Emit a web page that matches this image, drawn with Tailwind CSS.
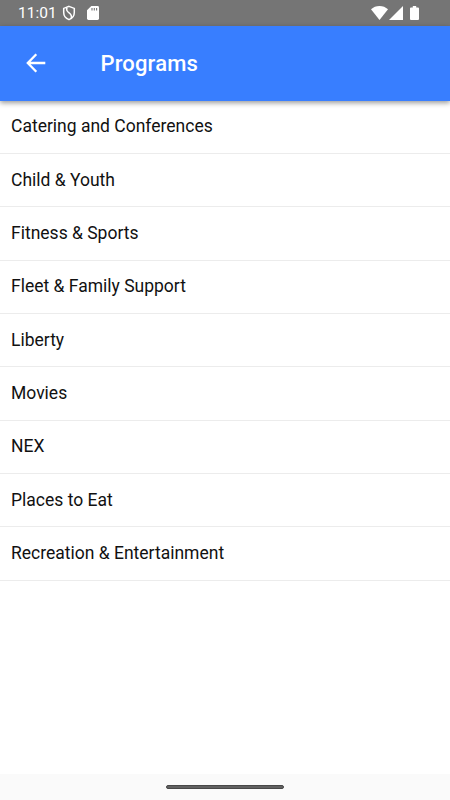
<!DOCTYPE html>
<html lang="en">
     <head>
          <title>Programs</title>
          <meta charset="utf-8">
          <meta name="viewport" content="width=device-width, initial-scale=1">
          <script src="https://cdn.jsdelivr.net/npm/@tailwindcss/browser@4"></script>
     </head>
     <body class="bg-white font-[Roboto,sans-serif]">
          <div class="flex flex-col h-screen overflow-hidden">
               <!-- status bar -->
               <div class="flex items-center h-[26px] shrink-0 bg-[#757575] text-white pl-[18px] pr-[31px]">
                    <span class="text-[15.5px] leading-none w-[39px] pt-px whitespace-nowrap">11:01</span>
                    <svg class="ml-[5px] w-[14px] h-4" viewBox="0 0 14 16" fill="none" stroke="currentColor" stroke-width="1.5"><path d="M7 1.4L12.3 3.4V7.5C12.3 11 10.2 13.4 7 14.6C3.8 13.4 1.7 11 1.7 7.5V3.4Z"/><path d="M5 2.6C4 5 4.8 6.2 6.8 7.6C9.2 9.3 10 10.6 9.2 13"/></svg>
                    <svg class="ml-[11px] w-3 h-[14px]" viewBox="0 0 12 14"><path fill="currentColor" d="M4.3 0H10.6Q12 0 12 1.4V12.6Q12 14 10.6 14H1.4Q0 14 0 12.6V4.3Z"/><path stroke="#757575" stroke-width="1.1" d="M5 2V4.6M7.3 2V4.6M9.6 2V4.6"/></svg>
                    <svg class="ml-auto w-[17px] h-[14px]" viewBox="0 0 17 14"><path fill="currentColor" d="M8.5 14L0 3.3C2.3 1.2 5.2 0 8.5 0S14.7 1.2 17 3.3Z"/></svg>
                    <svg class="ml-px w-[14px] h-[14px]" viewBox="0 0 14 14"><path fill="currentColor" d="M14 0V14H0Z"/></svg>
                    <svg class="ml-[7px] w-[9px] h-[14px]" viewBox="0 0 9 14"><path fill="currentColor" d="M2.8 0H6.2V1.4H8Q9 1.4 9 2.4V13Q9 14 8 14H1Q0 14 0 13V2.4Q0 1.4 1 1.4H2.8Z"/></svg>
               </div>
               <header class="relative z-10 flex items-center h-[74.6px] shrink-0 bg-[#387eff] text-white pl-[26px] shadow-[0_2px_5px_rgba(0,0,0,0.4)]">
                    <svg class="w-5 h-5" viewBox="0 0 20 20" fill="none" stroke="currentColor" stroke-width="2.3"><path d="M19.3 10H2M10.3 1.3L1.8 10L10.3 18.7"/></svg>
                    <h1 class="ml-[54.5px] text-[22px] font-medium tracking-[0.15px]">Programs</h1>
               </header>
               <ul class="flex-1 text-[17.5px] text-[#111]">
                    <li class="flex items-center h-[53.35px] pl-[11px] pb-[0.6px] border-b border-[#ececec]">Catering and Conferences</li>
                    <li class="flex items-center h-[53.35px] pl-[11px] pb-[0.6px] border-b border-[#ececec]">Child &amp; Youth</li>
                    <li class="flex items-center h-[53.35px] pl-[11px] pb-[0.6px] border-b border-[#ececec]">Fitness &amp; Sports</li>
                    <li class="flex items-center h-[53.35px] pl-[11px] pb-[0.6px] border-b border-[#ececec]">Fleet &amp; Family Support</li>
                    <li class="flex items-center h-[53.35px] pl-[11px] pb-[0.6px] border-b border-[#ececec]">Liberty</li>
                    <li class="flex items-center h-[53.35px] pl-[11px] pb-[0.6px] border-b border-[#ececec]">Movies</li>
                    <li class="flex items-center h-[53.35px] pl-[11px] pb-[0.6px] border-b border-[#ececec]">NEX</li>
                    <li class="flex items-center h-[53.35px] pl-[11px] pb-[0.6px] border-b border-[#ececec]">Places to Eat</li>
                    <li class="flex items-center h-[53.35px] pl-[11px] pb-[0.6px] border-b border-[#ececec]">Recreation &amp; Entertainment</li>
               </ul>
               <!-- gesture bar -->
               <div class="flex justify-center items-center h-[26px] shrink-0 bg-[#fafafa]">
                    <div class="w-[118px] h-1 rounded-full bg-[#616161] border border-[#484848]"></div>
               </div>
          </div>
     </body>
</html>
